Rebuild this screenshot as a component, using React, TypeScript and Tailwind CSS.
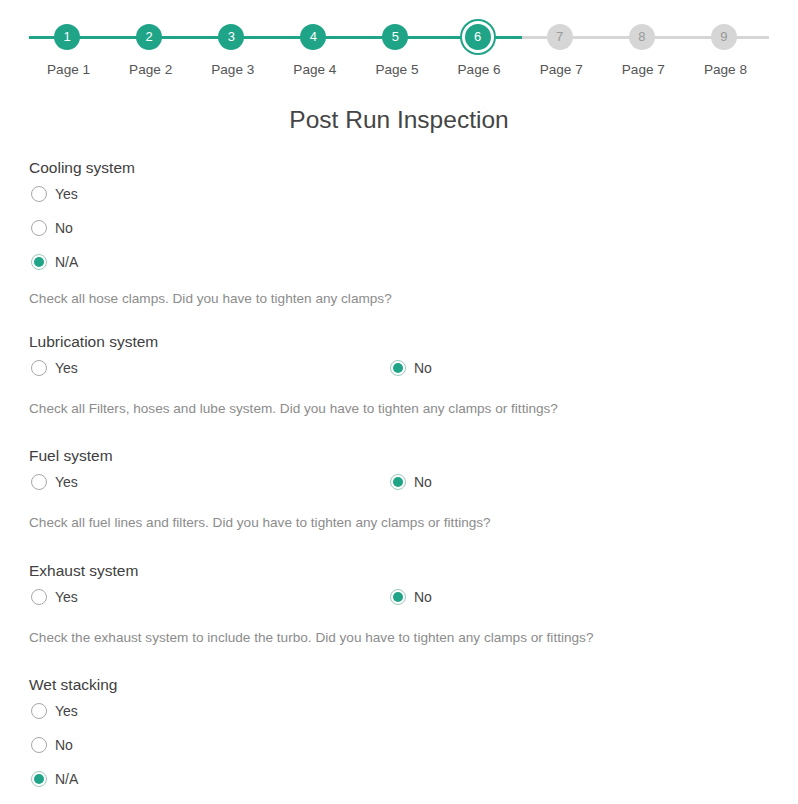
import React from 'react';

const GREEN = '#20a487';

const steps = [
  { n: 1, label: 'Page 1' },
  { n: 2, label: 'Page 2' },
  { n: 3, label: 'Page 3' },
  { n: 4, label: 'Page 4' },
  { n: 5, label: 'Page 5' },
  { n: 6, label: 'Page 6' },
  { n: 7, label: 'Page 7' },
  { n: 8, label: 'Page 7' },
  { n: 9, label: 'Page 8' },
];

const current = 6;

type Question = {
  title: string;
  options: string[];
  selected: string;
  columns: boolean;
  description: string;
  gapAfter: string;
};

const questions: Question[] = [
  {
    title: 'Cooling system',
    options: ['Yes', 'No', 'N/A'],
    selected: 'N/A',
    columns: false,
    description: 'Check all hose clamps. Did you have to tighten any clamps?',
    gapAfter: 'mb-[25px]',
  },
  {
    title: 'Lubrication system',
    options: ['Yes', 'No'],
    selected: 'No',
    columns: true,
    description: 'Check all Filters, hoses and lube system. Did you have to tighten any clamps or fittings?',
    gapAfter: 'mb-[29px]',
  },
  {
    title: 'Fuel system',
    options: ['Yes', 'No'],
    selected: 'No',
    columns: true,
    description: 'Check all fuel lines and filters. Did you have to tighten any clamps or fittings?',
    gapAfter: 'mb-[30px]',
  },
  {
    title: 'Exhaust system',
    options: ['Yes', 'No'],
    selected: 'No',
    columns: true,
    description: 'Check the exhaust system to include the turbo. Did you have to tighten any clamps or fittings?',
    gapAfter: 'mb-[29px]',
  },
  {
    title: 'Wet stacking',
    options: ['Yes', 'No', 'N/A'],
    selected: 'N/A',
    columns: false,
    description: '',
    gapAfter: '',
  },
];

const Radio = ({ label, checked }: { label: string; checked: boolean }) => (
  <div className="flex h-[24px] items-center">
    <span
      className={`ml-[2px] flex h-[16px] w-[16px] items-center justify-center rounded-full border ${
        checked ? 'border-[#9cc9bd]' : 'border-[#a8a8a8]'
      }`}
    >
      {checked && <span className="h-[10px] w-[10px] rounded-full bg-[#20a487]" />}
    </span>
    <span className="ml-[8px] text-[14px] text-[#454545]">{label}</span>
  </div>
);

const Progress = () => (
  <div className="relative pt-[24px]">
    <div className="absolute left-[29px] top-[35.5px] h-[3px] w-[740px] bg-[#d6d6d6]" />
    <div className="absolute left-[29px] top-[35.5px] h-[3px] w-[493px]" style={{ backgroundColor: GREEN }} />
    <div className="relative ml-[26px] grid w-[739px] grid-cols-9">
      {steps.map(s => {
        const done = s.n <= current;
        return (
          <div key={s.n} className="flex flex-col items-center">
            <div
              className={`flex h-[26px] w-[26px] items-center justify-center rounded-full text-[13px] ${
                done ? 'bg-[#20a487] text-white' : 'bg-[#d6d6d6] text-[#9a9a9a]'
              } ${s.n === current ? 'shadow-[0_0_0_3px_#ffffff,0_0_0_5px_#20a487]' : ''}`}
            >
              {s.n}
            </div>
            <div className="ml-[3px] mt-[12px] text-[13.6px] leading-[16px] text-[#555555]">{s.label}</div>
          </div>
        );
      })}
    </div>
  </div>
);

export default function App() {
  return (
    <div className="min-h-screen bg-white font-['Liberation_Sans',Arial,sans-serif]">
      <Progress />
      <h1 className="mt-[26px] text-center text-[24.5px] leading-[32px] text-[#454545]">Post Run Inspection</h1>
      <div className="mt-[22px] pl-[29px] pr-[29px]">
        {questions.map(q => (
          <div key={q.title} className={q.gapAfter}>
            <div className="text-[15.5px] leading-[20px] text-[#404040]">{q.title}</div>
            {q.columns ? (
              <div className="mt-[4px] grid grid-cols-[359px_1fr]">
                {q.options.map(o => (
                  <Radio key={o} label={o} checked={o === q.selected} />
                ))}
              </div>
            ) : (
              <div className="mt-[4px] flex flex-col gap-[10px]">
                {q.options.map(o => (
                  <Radio key={o} label={o} checked={o === q.selected} />
                ))}
              </div>
            )}
            {q.description && (
              <div
                className={`${q.columns ? 'mt-[21px]' : 'mt-[17px]'} text-[13.6px] leading-[16px] text-[#8c8c8c]`}
              >
                {q.description}
              </div>
            )}
          </div>
        ))}
      </div>
    </div>
  );
}
